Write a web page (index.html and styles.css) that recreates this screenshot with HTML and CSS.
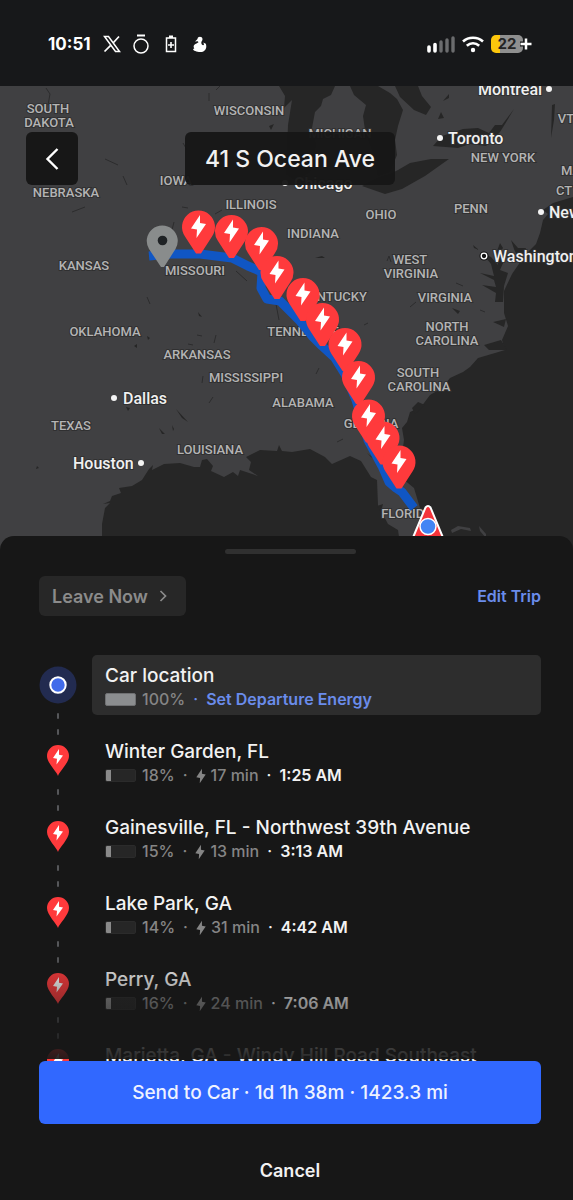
FILE: index.html
```html
<!DOCTYPE html>
<html lang="en">
<head>
<meta charset="utf-8">
<meta name="viewport" content="width=device-width, initial-scale=1">
<title>Trip planner</title>
<link rel="stylesheet" href="styles.css">
</head>
<body>
<svg class="defs" aria-hidden="true">
  <defs>
    <path id="bolt" d="M1.5-11.5 L-7.5 2 L-1.5 3 L-2 11.5 L7.5-2.5 L1.5-3.5 Z"/>
    <g id="stop">
      <path d="M-2.5 27 L-13.5 10 A16.5 16.5 0 1 1 13.5 10 L2.5 27 Z" fill="#ff3a3c"/>
      <use href="#bolt" fill="#fff"/>
    </g>
    <g id="pin">
      <path d="M11 31 C10 27 0 18 0 11 A11 11 0 0 1 22 11 C22 18 12 27 11 31 Z" fill="#ff3a3c"/>
      <path d="M12 4 L6 13 L10 13.700 L9.500 19.500 L16 10.500 L12 9.800 Z" fill="#fff"/>
    </g>
    <g id="dashes" stroke="#56575a" stroke-width="2" stroke-linecap="round">
      <path d="M19 59V63M19 75V79"/>
    </g>
  </defs>
</svg>
<div class="app">
  <header class="status">
    <span class="clock">10:51</span>
    <svg class="ico-x" viewBox="0 0 18 18" width="18" height="18" fill="none" stroke="#fff"><path d="M1.500 1.500H5.500L16.500 16.500H12.500Z" stroke-width="1.500"/><path d="M16 1.500L10.300 7.800M7.700 10.300L1.500 16.500" stroke-width="1.700"/></svg>
    <svg class="ico-ring" viewBox="0 0 16 20" width="16" height="20" fill="none" stroke="#fff"><path d="M4 1.500H12" stroke-width="2"/><circle cx="8" cy="12" r="7" stroke-width="1.500"/></svg>
    <svg class="ico-cell" viewBox="0 0 12 18" width="12" height="18"><path d="M1.500 3H10.500V16.500H1.500Z" fill="none" stroke="#fff" stroke-width="1.500"/><path d="M4 .5H8V3H4ZM5.200 7H6.800V9.200H9V10.800H6.800V13H5.200V10.800H3V9.200H5.200Z" fill="#fff"/></svg>
    <svg class="ico-duck" viewBox="0 0 14 17" width="14" height="17" fill="#fff"><path d="M4.500 3C4.500 0 9.500 0 9.500 3.200C9.500 4.800 8.300 5.400 8.300 6.500C8.300 9.200 10.800 10 11 8.200L10.300 6.500L12.800 7.800C14.500 12.500 11.500 16 7.500 16C3.500 16 .2 14.600 0 13L1.300 12.600C-.3 10 1.200 8.200 3.500 7.500L5.500 6.300L4.800 5.300L2 5.500L3.300 4.300Z"/></svg>
    <span class="spacer"></span>
    <svg class="ico-signal" viewBox="0 0 29 17" width="29" height="17"><path d="M2 11V15M8 8.500V15" stroke="#fff" stroke-width="3.600" stroke-linecap="round"/><path d="M14 6V15M20 4V15M26 2V15" stroke="#6b6c6e" stroke-width="3.400" stroke-linecap="round"/></svg>
    <svg class="ico-wifi" viewBox="0 0 22 17" width="22" height="17" fill="none" stroke="#fff" stroke-width="2.600"><path d="M1 5.500C6.500 .5 15.500 .5 21 5.500M4.800 9.800C8.500 6.500 13.500 6.500 17.200 9.800"/><circle cx="11" cy="14" r="2.200" fill="#fff" stroke="none"/></svg>
    <span class="battery"><span class="battery-level">22</span><svg viewBox="0 0 12 12" width="12" height="12"><path d="M6 0V12M0 6H12" stroke="#17181a" stroke-width="5"/><path d="M6 .5V11.500M.5 6H11.500" stroke="#fff" stroke-width="2.500"/></svg></span>
  </header>

  <section class="map" aria-label="Route map">
    <svg class="map-art" viewBox="0 86 573 464" preserveAspectRatio="xMidYMin slice">
      <rect y="86" width="573" height="464" fill="#404042"/>
      <g fill="#262626">
        <path d="M279 86 L335 86 L331 95 L323 99 L321 106 L315 112 L312 128 L316 145 L310 172 L296 181 L286 174 L288 125 L292 100 L284 108 L285 96 Z"/>
        <path d="M350 86 L378 86 L390 93 L397 99 L403 110 L398 126 L395 140 L397 155 L390 172 L378 176 L372 150 L365 130 L363 116 L366 105 L354 95 Z"/>
        <path d="M395 86 L418 86 L422 96 L431 107 L426 115 L414 110 L400 97 Z"/>
        <path d="M362 186 L385 194 L402 189 L425 176 L449 159 L431 159 L410 163 L398 170 L390 174 L377 178 Z"/>
        <path d="M433 146 L442 136 L463 129 L478 128 L489 133 L495 125 L502 125 L514 109 L505 124 L500 132 L486 146 L470 144 L458 148 Z"/>
        <path d="M438 119 L441 112 L444 118ZM443 101 L449 94 L449 98ZM552 105 L555 104 L554 120 L551 138Z"/>
        <path d="M573 197 L553 203 L543 210 L548 214 L543 220 L540 233 L536 244 L525 255 L512 274 L504 291 L504 313 L508 326 L502 340 L505 350 L495 353 L478 358 L470 367 L463 372 L450 378 L442 388 L430 395 L421 407 L410 412 L407 422 L402 428 L404 440 L401 462 L403 479 L414 488 L420 508 L427 530 L427 550 L573 550 Z"/>
        <path d="M500 243 L503 248 L499 254 L504 261 L500 270 L508 273 L504 286 L503 302 L495 302 L496 293 L482 285 L496 287 L494 280 L480 273 L494 276 L491 264 L482 253 L491 257 L498 265 L497 251ZM511 240 L518 248 L526 248 L520 263 L514 249ZM473 245 L479 250 L474 248ZM506 319 L493 322 L504 327ZM484 345 L501 340 L507 350 L489 350Z"/>
        <path d="M102 550 L102 524 L105 508 L110 503 L103 504 L110 501 L112 496 L121 493 L119 488 L132 486 L142 480 L149 469 L153 465 L152 470 L164 464 L180 463 L194 467 L200 467 L202 460 L207 459 L213 466 L211 471 L224 477 L233 472 L238 476 L240 470 L258 476 L249 470 L251 462 L246 457 L260 450 L277 451 L279 445 L282 451 L292 452 L310 449 L325 457 L332 464 L350 456 L361 461 L371 477 L377 480 L378 505 L388 524 L398 530 L401 550 Z"/>
        <path d="M412 408 L418 402 L425 405 L415 414ZM377 506 L383 504 L381 512ZM367 453 L376 460 L371 457ZM159 428 L165 434 L162 434ZM176 409 L188 422 L182 418ZM172 425 L174 429 L173 431ZM126 407 L130 408 L128 411ZM37 466 L39 468 L36 469ZM147 336 L150 338 L148 340ZM134 346 L137 344 L137 348ZM198 312 L202 317 L199 316ZM452 308 L460 311 L458 314ZM315 258 L322 256 L325 258ZM269 126 L274 124 L271 130Z"/>
      </g>
      <g fill="none" stroke="#2c2c2d" stroke-width="1">
        <path d="M46 88 L50 94 L48 105M105 159 L118 165M123 176 L127 185M72 212 L85 207M147 297 L150 304M209 93V101M216 90 L222 84M183 143 L187 150M236 271 L247 281M276 304 L279 320M197 335 L202 336M216 335 L214 343M188 344 L193 345M209 403 L213 397M203 376 L202 383M410 307 L416 302M387 261 L389 256 L391 262M364 325 L368 323M480 310 L485 312M456 283 L463 286M182 207 L188 208M215 214 L222 210M174 222 L172 230M316 374 L319 368M337 442 L343 439"/>
      </g>
      <path d="M451 530 L458 526 L470 528 L471 531 L461 529 L452 533ZM479 526 L486 534 L486 538 L480 531Z" fill="#404042"/>

      <g class="state" text-anchor="middle">
        <text x="48" y="113">SOUTH</text><text x="49" y="127">DAKOTA</text>
        <text x="249" y="115">WISCONSIN</text>
        <text x="340" y="138">MICHIGAN</text>
        <text x="503" y="162">NEW YORK</text>
        <text x="66" y="197">NEBRASKA</text>
        <text x="176" y="185">IOWA</text>
        <text x="251" y="209">ILLINOIS</text>
        <text x="381" y="219">OHIO</text>
        <text x="471" y="213">PENN</text>
        <text x="313" y="238">INDIANA</text>
        <text x="84" y="270">KANSAS</text>
        <text x="195" y="275">MISSOURI</text>
        <text x="410" y="264">WEST</text><text x="411" y="278">VIRGINIA</text>
        <text x="334" y="301">KENTUCKY</text>
        <text x="445" y="302">VIRGINIA</text>
        <text x="105" y="336">OKLAHOMA</text>
        <text x="303" y="336">TENNESSEE</text>
        <text x="447" y="331">NORTH</text><text x="447" y="345">CAROLINA</text>
        <text x="197" y="359">ARKANSAS</text>
        <text x="246" y="382">MISSISSIPPI</text>
        <text x="418" y="377">SOUTH</text><text x="419" y="391">CAROLINA</text>
        <text x="303" y="407">ALABAMA</text>
        <text x="71" y="430">TEXAS</text>
        <text x="371" y="428">GEORGIA</text>
        <text x="210" y="454">LOUISIANA</text>
        <text x="407" y="518">FLORIDA</text>
        <text x="566" y="123">VT</text><text x="571" y="175">MA</text><text x="564" y="195">CT</text>
      </g>
      <g class="city">
        <text x="478" y="95">Montreal</text><text x="448" y="144">Toronto</text>
        <text x="294" y="189">Chicago</text><text x="549" y="218">New York</text>
        <text x="493" y="262">Washington</text><text x="123" y="404">Dallas</text>
        <text x="73" y="469">Houston</text>
      </g>
      <g fill="#f4f4f4">
        <circle cx="549" cy="89" r="3"/><circle cx="440" cy="138" r="3"/><circle cx="285" cy="183" r="3"/><circle cx="541" cy="212" r="3"/><circle cx="114" cy="398" r="3"/><circle cx="141" cy="463" r="3"/>
        <circle cx="484" cy="256" r="4.500" fill="#111"/><circle cx="484" cy="256" r="2.800" fill="#111" stroke="#fff" stroke-width="1.300"/>
      </g>

      <path d="M149 256 L170 254 L200 254 L232 258 L248 266 L262 272 L261 288 L267 299 L280 301 L299 320 L312 336 L322 346 L335 358 L345 374 L356 400 L368 440 L382 466 L389 482 L396 488 L402 492 L414 508" fill="none" stroke="#1056c4" stroke-width="9" stroke-linejoin="round"/>
      <path d="M161 267 L149 249 A15.500 15.500 0 1 1 175.500 249 L164 267 Z" fill="#898c8c"/>
      <circle cx="162.500" cy="240.500" r="4.800" fill="#1f2225"/>
      <use href="#stop" x="198.500" y="226.500"/>
      <use href="#stop" x="231.500" y="231"/>
      <use href="#stop" x="261.500" y="243"/>
      <use href="#stop" x="277" y="272"/>
      <use href="#stop" x="303" y="294"/>
      <use href="#stop" x="322.500" y="319"/>
      <use href="#stop" x="345" y="344"/>
      <use href="#stop" x="358.500" y="377"/>
      <use href="#stop" x="368.500" y="415.500"/>
      <use href="#stop" x="383" y="437.500"/>
      <use href="#stop" x="399" y="461.500"/>
      <path d="M412 540 L425.500 507.500 Q428 504.500 430.500 507.500 L444 540 Z" fill="#f5343b" stroke="#fff" stroke-width="2"/>
      <circle cx="428" cy="526.500" r="8" fill="#4285f4" stroke="#fff" stroke-width="1.500"/>
    </svg>
    <div class="map-bar">
      <button class="back" type="button" aria-label="Back"><svg viewBox="0 0 14 22" width="14" height="22" fill="none" stroke="#fff" stroke-width="2.400"><path d="M12.500 1L2.500 11L12.500 21"/></svg></button>
      <h1 class="destination">41 S Ocean Ave</h1>
    </div>
  </section>

  <main class="sheet">
    <div class="handle"></div>
    <div class="actions">
      <button class="leave" type="button">Leave Now <svg viewBox="0 0 8 12" width="8" height="12" fill="none" stroke="#8b8b8b" stroke-width="1.700"><path d="M1.500 1L6.500 6L1.500 11"/></svg></button>
      <a class="link" href="#edit">Edit Trip</a>
    </div>
    <div class="list-wrap">
      <ol class="stops">
        <li class="stop">
          <svg class="rail" viewBox="0 0 38 76" width="38" height="76"><circle cx="19" cy="30" r="18.500" fill="#222b50"/><circle cx="19" cy="30" r="7.700" fill="#416bea" stroke="#fff" stroke-width="2"/><use href="#dashes"/></svg>
          <div class="body current"><h2>Car location</h2><p><span class="charge full"></span><span>100%</span><i class="blue">·</i><a class="link" href="#energy">Set Departure Energy</a></p></div>
        </li>
        <li class="stop">
          <svg class="rail" viewBox="0 0 38 76" width="38" height="76"><use href="#pin" x="8" y="14"/><use href="#dashes"/></svg>
          <div class="body"><h2>Winter Garden, FL</h2><p><span class="charge"></span><span>18%</span><i>·</i><svg class="zap" viewBox="-8 -12 16 24" width="10" height="18"><use href="#bolt"/></svg><span>17 min</span><i class="on">·</i><time>1:25 AM</time></p></div>
        </li>
        <li class="stop">
          <svg class="rail" viewBox="0 0 38 76" width="38" height="76"><use href="#pin" x="8" y="14"/><use href="#dashes"/></svg>
          <div class="body"><h2>Gainesville, FL - Northwest 39th Avenue</h2><p><span class="charge"></span><span>15%</span><i>·</i><svg class="zap" viewBox="-8 -12 16 24" width="10" height="18"><use href="#bolt"/></svg><span>13 min</span><i class="on">·</i><time>3:13 AM</time></p></div>
        </li>
        <li class="stop">
          <svg class="rail" viewBox="0 0 38 76" width="38" height="76"><use href="#pin" x="8" y="14"/><use href="#dashes"/></svg>
          <div class="body"><h2>Lake Park, GA</h2><p><span class="charge"></span><span>14%</span><i>·</i><svg class="zap" viewBox="-8 -12 16 24" width="10" height="18"><use href="#bolt"/></svg><span>31 min</span><i class="on">·</i><time>4:42 AM</time></p></div>
        </li>
        <li class="stop">
          <svg class="rail" viewBox="0 0 38 76" width="38" height="76"><use href="#pin" x="8" y="14"/><use href="#dashes"/></svg>
          <div class="body"><h2>Perry, GA</h2><p><span class="charge"></span><span>16%</span><i>·</i><svg class="zap" viewBox="-8 -12 16 24" width="10" height="18"><use href="#bolt"/></svg><span>24 min</span><i class="on">·</i><time>7:06 AM</time></p></div>
        </li>
        <li class="stop">
          <svg class="rail" viewBox="0 0 38 76" width="38" height="76"><use href="#pin" x="8" y="14"/></svg>
          <div class="body"><h2>Marietta, GA - Windy Hill Road Southeast</h2></div>
        </li>
      </ol>
    </div>
    <button class="send" type="button">Send to Car · 1d 1h 38m · 1423.3 mi</button>
    <button class="cancel" type="button">Cancel</button>
  </main>
</div>
</body>
</html>
```
FILE: styles.css
```css
* { box-sizing: border-box; }
body { margin: 0; background: #171717; color: #f2f2f2; font-family: Inter, "Liberation Sans", sans-serif; }
h1, h2, p, ol { margin: 0; padding: 0; }
button { border: 0; padding: 0; font: inherit; color: inherit; cursor: pointer; }
a { text-decoration: none; }
.defs { position: absolute; width: 0; height: 0; }
.app { height: 100vh; display: flex; flex-direction: column; overflow: hidden; }

/* Status bar */
.status { flex: none; height: 86px; padding: 2px 41px 0 48px; display: flex; align-items: center; background: #17181a; }
.clock { font-size: 17px; font-weight: 700; color: #fff; margin-right: 12px; }
.ico-x { margin-right: 12px; }
.ico-ring { margin-right: 16px; }
.ico-cell { margin-right: 16px; }
.spacer { flex: 1; }
.ico-signal { margin-right: 6px; }
.ico-wifi { margin-right: 7px; }
.battery { display: flex; align-items: center; }
.battery-level { width: 32px; height: 18px; border-radius: 5px; background: linear-gradient(90deg, #fdc70c 28%, #8f8f8f 28%); color: #242424; font-size: 15px; font-weight: 700; line-height: 18px; text-align: center; }
.battery svg { margin-left: -3px; }

/* Map */
.map { position: relative; flex: none; height: 464px; background: #404042; }
.map-art { display: block; width: 100%; height: 100%; }
.state { font: 500 13px Roboto, sans-serif; fill: #b4b4b4; paint-order: stroke; stroke: #303031; stroke-width: 2px; }
.city { font: 500 16px Roboto, sans-serif; fill: #f0f0f0; paint-order: stroke; stroke: #303031; stroke-width: 2px; }
.map-bar { position: absolute; top: 46px; left: 26px; right: 32px; display: grid; grid-template-columns: 1fr auto 1fr; }
.back { width: 52px; height: 53px; border-radius: 6px; background: #171717; display: grid; place-items: center; }
.destination { height: 53px; padding: 0 20px; margin-left: 13px; border-radius: 6px; background: rgba(23, 23, 23, .97); font-size: 23px; font-weight: 500; line-height: 54px; white-space: nowrap; }

/* Sheet */
.sheet { position: relative; flex: 1; min-height: 0; margin-top: -14px; padding: 13px 32px 15px 39px; border-radius: 14px 14px 0 0; background: #171717; display: flex; flex-direction: column; }
.handle { flex: none; width: 131px; height: 5px; margin: 0 auto 22px; border-radius: 3px; background: #303030; }
.actions { flex: none; display: flex; align-items: center; justify-content: space-between; margin-bottom: 39px; }
.leave { height: 40px; padding: 0 19px 0 13px; border-radius: 6px; background: #272727; color: #8b8b8b; font-size: 18px; font-weight: 600; display: flex; align-items: center; gap: 11px; }
.link { color: #6a8ceb; font-size: 16px; font-weight: 600; }
.list-wrap { position: relative; flex: 1; min-height: 0; overflow: hidden; }
.list-wrap::after { content: ""; position: absolute; left: 0; right: 0; bottom: 2px; height: 108px; background: linear-gradient(rgba(23, 23, 23, 0), rgba(23, 23, 23, .92)); pointer-events: none; }
.stops { list-style: none; display: grid; gap: 16px; }
.stop { height: 60px; display: grid; grid-template: 60px / 38px minmax(0, 1fr); gap: 15px; }
.rail { overflow: visible; }
.body { padding: 8px 13px 4px; border-radius: 5px; }
.current { background: #2d2d2d; }
.body h2 { font-size: 19px; font-weight: 500; line-height: 25px; white-space: nowrap; }
.body p { display: flex; align-items: center; line-height: 23px; font-size: 16px; font-weight: 500; color: #858585; white-space: nowrap; }
.body i { width: 21px; text-align: center; font-style: normal; }
.body .on { color: #f2f2f2; }
.body .blue { color: #6a8ceb; }
.body time { color: #f2f2f2; font-weight: 600; }
.charge { width: 31px; height: 13px; margin-right: 6px; border: 1px solid #2b2b2b; border-radius: 2px; background: linear-gradient(90deg, #8a8a8a 5px, #262626 5px); }
.full { background: #8b8d8f; border-color: #6f7072; }
.zap { fill: #858585; margin-right: 5px; }
.send { flex: none; height: 63px; border-radius: 6px; background: #3168ff; color: #eef2ff; font-size: 19px; font-weight: 500; }
.cancel { flex: none; height: 30px; margin-top: 31px; background: none; font-size: 18px; font-weight: 600; }
```
